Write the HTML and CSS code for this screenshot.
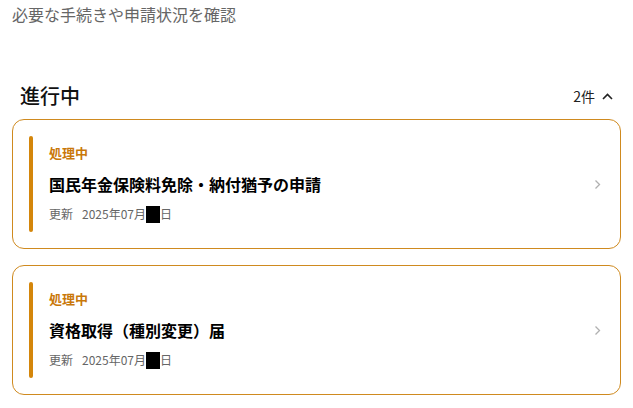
FILE: index.html
```html
<!DOCTYPE html>
<html lang="ja">
<head>
  <meta charset="UTF-8">
  <title>申請状況</title>
  <link rel="stylesheet" href="styles.css">
</head>
<body>

  <p class="lead">必要な手続きや申請状況を確認</p>

  <div class="group">
    <div class="group-head">
      <h2>進行中</h2>
      <div class="count">
        2件
        <svg width="11" height="7" viewBox="0 0 11 7"><path d="M1 6 L5.5 1.5 L10 6" fill="none" stroke="#222" stroke-width="1.6"/></svg>
      </div>
    </div>

    <div class="card">
      <div class="bar"></div>
      <div class="info">
        <div class="status">処理中</div>
        <div class="title">国民年金保険料免除・納付猶予の申請</div>
        <div class="date"><span class="date-label">更新</span>2025年07月<span class="mask"></span>日</div>
      </div>
      <svg class="arrow" width="7" height="11" viewBox="0 0 7 11"><path d="M1.5 1.5 L5.5 5.5 L1.5 9.5" fill="none" stroke="#b0b0b0" stroke-width="1.3"/></svg>
    </div>

    <div class="card">
      <div class="bar"></div>
      <div class="info">
        <div class="status">処理中</div>
        <div class="title">資格取得（種別変更）届</div>
        <div class="date"><span class="date-label">更新</span>2025年07月<span class="mask"></span>日</div>
      </div>
      <svg class="arrow" width="7" height="11" viewBox="0 0 7 11"><path d="M1.5 1.5 L5.5 5.5 L1.5 9.5" fill="none" stroke="#b0b0b0" stroke-width="1.3"/></svg>
    </div>
  </div>

</body>
</html>
```

FILE: styles.css
```css
body {
  font-family: "Noto Sans CJK JP", "Noto Sans", sans-serif;
  background-color: #ffffff;
  color: #111;
  margin: 0;
  padding: 2px 12px 0;
}

.lead {
  margin: 0;
  font-size: 16px;
  line-height: 24px;
  color: #666;
}

.group {
  margin-top: 56px;
}

.group-head {
  display: flex;
  align-items: center;
  justify-content: space-between;
  padding: 0 8px;
  height: 28px;
  margin-bottom: 9px;
}

.group-head h2 {
  margin: 0;
  font-size: 20px;
  font-weight: 500;
  line-height: 28px;
}

.count {
  display: flex;
  align-items: center;
  gap: 7px;
  font-size: 14px;
  color: #222;
}

.card {
  display: flex;
  align-items: center;
  border: 1px solid #cf8a1f;
  border-radius: 12px;
  padding: 16px;
  margin-bottom: 16px;
}

.bar {
  width: 4px;
  align-self: stretch;
  background-color: #d4860b;
  border-radius: 2px;
  margin-right: 16px;
}

.info {
  flex: 1;
  padding: 8px 0 9px;
}

.status {
  font-size: 13px;
  line-height: 18px;
  font-weight: 700;
  color: #c9780a;
}

.title {
  margin-top: 10px;
  font-size: 16px;
  line-height: 24px;
  font-weight: 700;
  color: #000;
}

.date {
  margin-top: 9px;
  font-size: 12px;
  line-height: 18px;
  color: #666;
  display: flex;
  align-items: center;
}

.date-label {
  margin-right: 9px;
}

.mask {
  display: inline-block;
  width: 14px;
  height: 17px;
  background-color: #000;
}

.arrow {
  flex-shrink: 0;
  margin: 0 3px 0 12px;
}
```
